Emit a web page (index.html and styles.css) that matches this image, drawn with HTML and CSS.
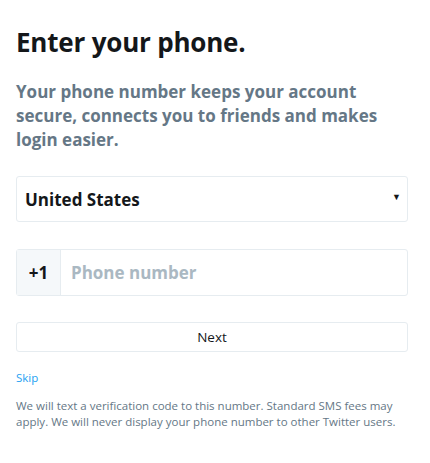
FILE: index.html
```html
<!DOCTYPE html>
<html lang="en">
<head>
<meta charset="utf-8">
<title>Enter your phone</title>
<link rel="stylesheet" href="styles.css">
</head>
<body>
<main class="page">
  <h1 class="title">Enter your phone.</h1>
  <p class="subtitle">Your phone number keeps your account secure, connects you to friends and makes login easier.</p>
  <div class="select">
    <span class="select-value">United States</span>
    <span class="select-arrow">▼</span>
  </div>
  <div class="phone">
    <span class="phone-code">+1</span>
    <span class="phone-placeholder">Phone number</span>
  </div>
  <button class="next" type="button">Next</button>
  <a class="skip" href="#">Skip</a>
  <p class="note">We will text a verification code to this number. Standard SMS fees may apply. We will never display your phone number to other Twitter users.</p>
</main>
</body>
</html>
```

FILE: styles.css
```css
html, body {
  margin: 0;
  padding: 0;
  background: #ffffff;
}

body {
  font-family: "Open Sans", "Noto Sans", sans-serif;
  color: #14171a;
}

.page {
  width: 392px;
  padding: 0 16px;
  display: flex;
  flex-direction: column;
}

.title {
  margin: 26px 0 0;
  font-size: 26px;
  line-height: 32px;
  font-weight: 700;
  letter-spacing: -0.2px;
  color: #14171a;
}

.subtitle {
  margin: 22px 0 0;
  font-size: 17px;
  line-height: 24px;
  font-weight: 700;
  color: #657786;
}

.select {
  margin-top: 24px;
  height: 44px;
  border: 1px solid #e6ecf0;
  border-radius: 3px;
  display: flex;
  align-items: center;
  justify-content: space-between;
  padding: 0 6px 0 8px;
}

.select-value {
  font-size: 17px;
  font-weight: 700;
  color: #14171a;
}

.select-arrow {
  font-size: 9px;
  color: #14171a;
  margin-top: -6px;
}

.phone {
  margin-top: 27px;
  height: 45px;
  border: 1px solid #e6ecf0;
  border-radius: 3px;
  display: flex;
  align-items: stretch;
}

.phone-code {
  width: 43px;
  background: #f5f8fa;
  border-right: 1px solid #e6ecf0;
  display: flex;
  align-items: center;
  justify-content: center;
  font-size: 17px;
  font-weight: 700;
  color: #14171a;
}

.phone-placeholder {
  display: flex;
  align-items: center;
  padding-left: 10px;
  font-size: 17px;
  font-weight: 700;
  color: #aab8c2;
}

.next {
  margin-top: 26px;
  height: 30px;
  border: 1px solid #e6ecf0;
  border-radius: 3px;
  background: #ffffff;
  font-family: inherit;
  font-size: 13.5px;
  color: #14171a;
  padding: 0;
}

.skip {
  margin-top: 18px;
  align-self: flex-start;
  font-size: 11.5px;
  line-height: 16px;
  color: #1da1f2;
  text-decoration: none;
}

.note {
  margin: 12px 0 0;
  font-size: 11.5px;
  line-height: 16px;
  color: #657786;
}
```
